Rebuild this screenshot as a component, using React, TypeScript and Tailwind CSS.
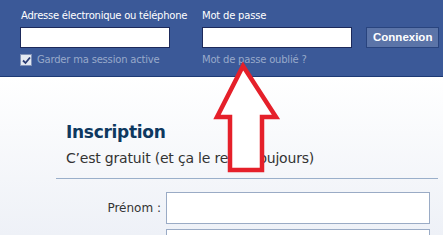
import { useState } from "react";

const font = { fontFamily: '"DejaVu Sans", Verdana, sans-serif' };

const App = () => {
  const [keep, setKeep] = useState(true);

  return (
    <div className="relative h-[235px] w-[443px] overflow-hidden bg-white" style={font}>
      {/* --- Login bar --- */}
      <header className="flex h-[77px] items-start gap-[32px] border-b border-[#1d3a75] bg-[#3b5998] pl-[20px] pt-[9px]">
        <div className="flex w-[150px] flex-col">
          <label className="pl-[1px] text-[10px] leading-[14px] tracking-[-0.25px] text-white whitespace-nowrap">
            Adresse électronique ou téléphone
          </label>
          <input className="mt-[4px] h-[21px] w-[150px] border border-[#1d2a5b] bg-white px-1 text-[11px] outline-none" />
          <label
            className="mt-[5px] flex cursor-pointer items-center gap-[5px] text-[10px] leading-[14px] tracking-[-0.2px] text-[#98a9ca] whitespace-nowrap"
            onClick={() => setKeep(!keep)}
          >
            <span className="flex h-[12px] w-[12px] items-center justify-center border border-[#8192b8] bg-[#e4e9f2]">
              {keep && (
                <svg width="9" height="9" viewBox="0 0 9 9">
                  <path d="M1 4.5 L3.5 7 L8 1.5" fill="none" stroke="#2a3b73" strokeWidth="1.8" />
                </svg>
              )}
            </span>
            Garder ma session active
          </label>
        </div>

        <div className="flex w-[150px] flex-col">
          <label className="text-[10px] leading-[14px] tracking-[-0.2px] text-white">Mot de passe</label>
          <input
            type="password"
            className="mt-[4px] h-[21px] w-[150px] border border-[#1d2a5b] bg-white px-1 text-[11px] outline-none"
          />
          <a href="#" className="mt-[5px] text-[10px] leading-[14px] tracking-[-0.2px] text-[#98a9ca]">
            Mot de passe oublié ?
          </a>
        </div>

        <button
          className="mt-[18px] ml-[-18px] h-[21px] border border-[#29447e] bg-[#5b74a8] px-[6px] text-[11.5px] font-bold text-white"
          style={{ fontFamily: '"Liberation Sans", Arial, sans-serif' }}
        >
          Connexion
        </button>
      </header>

      {/* --- Sign up --- */}
      <main className="h-[158px] bg-gradient-to-b from-white to-[#eef1f7] pl-[56px] pr-[5px] pt-[44px]">
        <div className="pl-[10px]">
          <h1 className="text-[17px] font-bold leading-[22px] tracking-[-0.3px] text-[#0e385f]">Inscription</h1>
          <p className="mt-[6px] text-[14px] leading-[18px] tracking-[-0.2px] text-[#333]">
            C’est gratuit (et ça le reste toujours)
          </p>
        </div>
        <div className="mt-[11px] border-t border-[#9aafca]" />

        <div className="mt-[13px] flex flex-col gap-[5px]">
          <div className="flex items-center">
            <label className="w-[110px] pr-[5px] text-right text-[12px] text-[#333]">Prénom :</label>
            <input className="h-[32px] w-[264px] border border-[#9aabc5] bg-white px-1 outline-none" />
          </div>
          <div className="flex items-center">
            <div className="w-[110px]" />
            <input className="h-[32px] w-[264px] border border-[#9aabc5] bg-white px-1 outline-none" />
          </div>
        </div>
      </main>

      {/* annotation arrow */}
      <svg className="absolute left-[210px] top-[60px]" width="76" height="116" viewBox="0 0 76 116">
        <path
          d="M33 6 L66 57 L52 57 L52 110 L20 110 L20 57 L7 57 Z"
          fill="white"
          stroke="#e5202a"
          strokeWidth="4.5"
          strokeLinejoin="miter"
        />
      </svg>
    </div>
  );
};

export default App;
